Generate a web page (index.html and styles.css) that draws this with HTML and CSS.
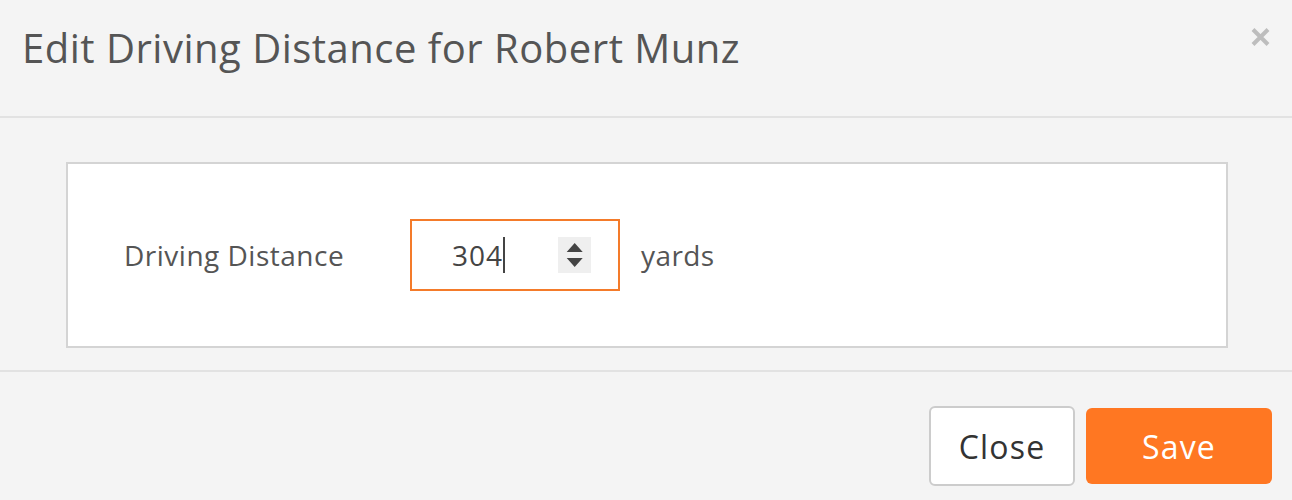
FILE: index.html
```html
<!DOCTYPE html>
<html>
<head>
<meta charset="utf-8">
<link rel="stylesheet" href="styles.css">
</head>
<body>
<div class="modal">
  <div class="modal-header">
    <h1 class="title">Edit Driving Distance for Robert Munz</h1>
    <span class="close-x">
      <svg width="19" height="18" viewBox="0 0 19 18"><path d="M2 1.5 L17 16.5 M17 1.5 L2 16.5" stroke="#bdbdbd" stroke-width="4" stroke-linecap="butt"/></svg>
    </span>
  </div>
  <div class="modal-body">
    <div class="panel">
      <span class="label">Driving Distance</span>
      <div class="input">
        <span class="value">304</span><span class="caret"></span>
        <span class="spinner">
          <svg width="33" height="36" viewBox="0 0 33 36"><path d="M8.7 15 L16.7 6 L24.7 15 Z M8.7 21 L16.7 30 L24.7 21 Z" fill="#444"/></svg>
        </span>
      </div>
      <span class="unit">yards</span>
    </div>
  </div>
  <div class="modal-footer">
    <button class="btn btn-close">Close</button>
    <button class="btn btn-save">Save</button>
  </div>
</div>
</body>
</html>
```
FILE: styles.css
```css
html, body {
  margin: 0;
  padding: 0;
  background: #f4f4f4;
  font-family: "Open Sans", "Noto Sans", sans-serif;
}
.modal {
  width: 1292px;
  height: 500px;
  background: #f4f4f4;
}
.modal-header {
  height: 118px;
  box-sizing: border-box;
  border-bottom: 2px solid #e2e2e2;
  display: flex;
  justify-content: space-between;
  align-items: flex-start;
}
.title {
  margin: 22px 0 0 22px;
  font-size: 40px;
  font-weight: 400;
  color: #555;
  line-height: 52px;
  letter-spacing: 0.5px;
}
.close-x {
  margin: 28px 22px 0 0;
  display: block;
  height: 18px;
}
.close-x svg { display: block; }
.modal-body {
  padding: 44px 64px 22px 66px;
  border-bottom: 2px solid #e2e2e2;
}
.panel {
  background: #fff;
  border: 2px solid #d4d4d4;
  height: 182px;
  display: flex;
  align-items: center;
  padding-left: 56px;
}
.label {
  font-size: 28px;
  color: #555;
  width: 286px;
  letter-spacing: 0.5px;
}
.input {
  width: 210px;
  height: 72px;
  box-sizing: border-box;
  border: 2px solid #f47b2a;
  display: flex;
  align-items: center;
  padding-left: 40px;
}
.value {
  font-size: 28px;
  color: #444;
  letter-spacing: 1px;
}
.caret {
  width: 2px;
  height: 36px;
  background: #444;
}
.spinner {
  margin-left: auto;
  margin-right: 27px;
  width: 33px;
  height: 36px;
  background: #efefef;
  display: block;
}
.spinner svg { display: block; }
.unit {
  font-size: 28px;
  color: #555;
  margin-left: 21px;
  letter-spacing: 0.4px;
}
.modal-footer {
  display: flex;
  justify-content: flex-end;
  align-items: center;
  gap: 11px;
  padding: 34px 20px 0 0;
}
.btn {
  font-family: "Open Sans", "Noto Sans", sans-serif;
  font-size: 32px;
  letter-spacing: 1.2px;
  border-radius: 6px;
  cursor: pointer;
}
.btn-close {
  width: 146px;
  height: 80px;
  background: #fff;
  border: 2px solid #cccccc;
  color: #333;
}
.btn-save {
  width: 186px;
  height: 76px;
  background: #ff7722;
  border: none;
  color: #fff;
}
```
